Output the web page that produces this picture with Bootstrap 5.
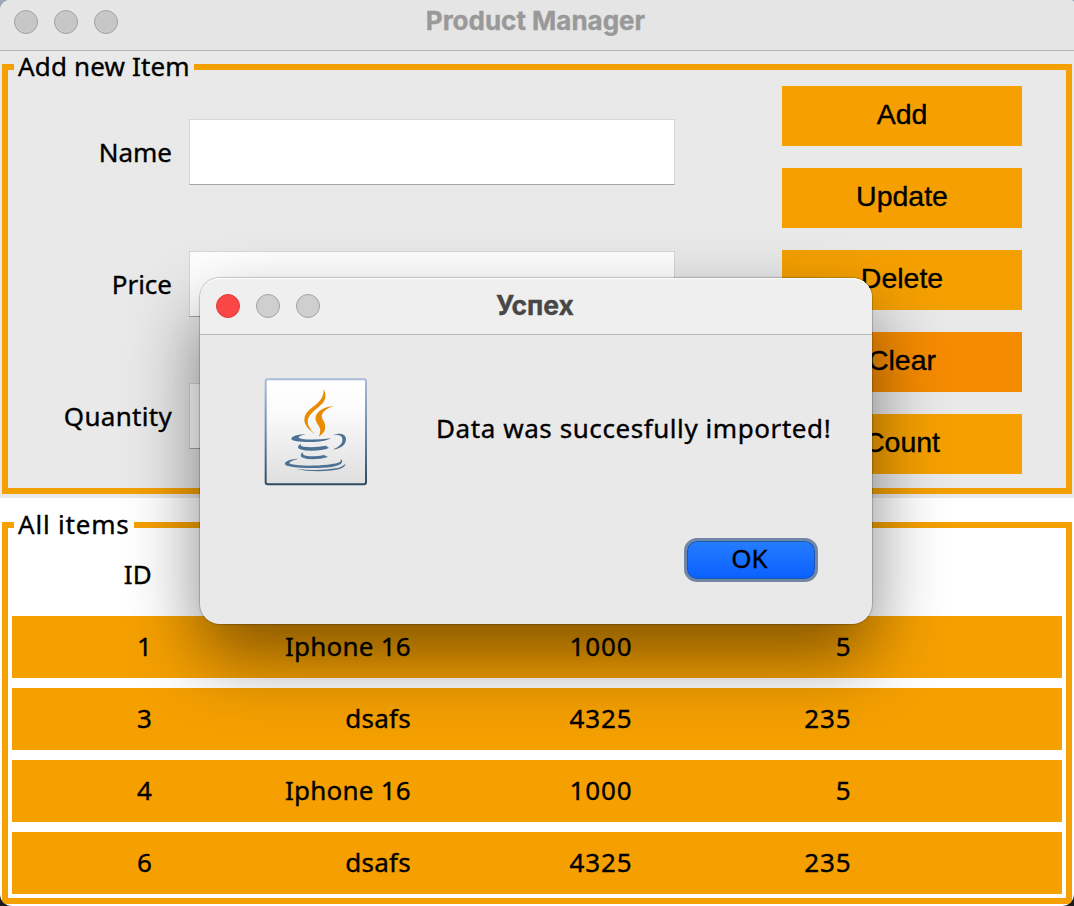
<!DOCTYPE html>
<html lang="en">
<head>
<meta charset="utf-8">
<title>Product Manager</title>
<link href="https://cdn.jsdelivr.net/npm/bootstrap@5.3.0/dist/css/bootstrap.min.css" rel="stylesheet">
<style>
:root{--amber:#f5a000;--panel:#e9e9e9}
body{font-family:"Noto Sans",sans-serif;font-size:26px;line-height:30px;color:#000;background:linear-gradient(#9aa6b2 50%,#1b1b1b 50%);height:906px;overflow:hidden;-webkit-text-stroke:.35px}
.app{height:906px;background:#fff;border-radius:10px 4px 12px 12px;overflow:hidden}
.titlebar{height:51px;background:#e5e5e5;border-bottom:1px solid #b4b4b4;padding:0 14px 7px}
.win-title{font:700 26px/30px Inter,sans-serif;color:#999;left:0;right:0}
.dot{width:24px;height:24px;border-radius:50%;background:#c7c7c7;border:1px solid #a2a2a2}
.form-panel{height:447px;background:var(--panel);padding:1px 2px 4px}
.list-panel{padding:12px 2px 2px;height:408px}
.box{border:6px solid var(--amber);min-width:0}
.box legend{float:none;width:auto;height:30px;margin:0 0 0 6px;padding:0 0 0 4px;font-size:26px;line-height:28px;white-space:nowrap}
.form-panel .box{height:442px}.list-panel .box{height:394px}
.form-panel legend{width:180px;letter-spacing:.15px}.list-panel legend{width:120px;letter-spacing:.8px}
.fields{width:667px;padding-top:37px;gap:66px}
.field-label{width:164px;margin-right:17px;line-height:66px;text-align:right}
.entry{width:486px;height:66px;border:1px solid #d6d6d6;border-bottom:1px solid #a5a5a5;border-radius:0;background:#fff}
.actions{width:240px;margin-left:107px;padding-top:4px;gap:22px}
.act{height:60px;border:0;border-radius:0;color:#000;background:var(--amber);font:28.5px/56px "Liberation Sans",sans-serif;padding:0 0 4px}
.act:hover,.act.hot{background:#f58b00}
.items{padding:0 4px}
.item{height:62px;margin-bottom:10px;background:var(--amber);display:grid;grid-template-columns:140px 259px 221px 219px;text-align:right;line-height:60px;letter-spacing:.25px}
.item.head{height:66px;background:none;line-height:68px}
.num{letter-spacing:.9px;margin-right:-.6px}
.dialog{position:absolute;left:200px;top:278px;width:672px;height:346px;border-radius:20px;background:var(--panel);box-shadow:0 0 1px 1px rgba(0,0,0,.2),0 34px 72px rgba(0,0,0,.47)}
.dialog-bar{height:57px;border-bottom:1px solid #b8b8b8;background:#efefef;border-radius:20px 20px 0 0;box-shadow:inset 0 2px 1px -1px #fff;padding:0 16px}
.dialog-bar .win-title{color:#474747;font-size:26.5px}
.dialog .dot{background:#cfcfcf}
.dialog .close-dot{background:#fb4646;border-color:#df3a3d}
.message{margin:35px 0 0 69px;white-space:nowrap;letter-spacing:.57px}
.ok{position:absolute;left:484px;top:260px;width:134px;height:44px;padding:0 3px 4px 0;border:3px solid #7187a5;border-radius:13px;background:linear-gradient(#257dff,#0a60ff);font:26px/34px "Noto Sans",sans-serif;color:#000;box-shadow:inset 0 0 0 1px #1956b5}
</style>
</head>
<body>
<div class="app position-relative">
  <header class="titlebar position-relative d-flex align-items-center gap-3">
    <span class="dot"></span><span class="dot"></span><span class="dot"></span>
    <div class="win-title position-absolute text-center" style="top:6px;left:-3px">Product Manager</div>
  </header>
  <section class="form-panel">
    <fieldset class="box">
      <legend>Add new Item</legend>
      <div class="d-flex">
        <div class="fields d-flex flex-column">
          <div class="d-flex"><label class="field-label" for="n">Name</label><input id="n" class="form-control entry"></div>
          <div class="d-flex"><label class="field-label" for="p">Price</label><input id="p" class="form-control entry"></div>
          <div class="d-flex"><label class="field-label" for="q" style="letter-spacing:.3px">Quantity</label><input id="q" class="form-control entry"></div>
        </div>
        <div class="actions d-flex flex-column">
          <button class="btn act">Add</button><button class="btn act">Update</button><button class="btn act">Delete</button><button class="btn act hot">Clear</button><button class="btn act">Count</button>
        </div>
      </div>
    </fieldset>
  </section>
  <section class="list-panel">
    <fieldset class="box">
      <legend>All items</legend>
      <div class="items">
        <div class="item head"><span>ID</span></div>
        <div class="item"><span>1</span><span>Iphone 16</span><span class="num">1000</span><span class="num">5</span></div>
        <div class="item"><span>3</span><span>dsafs</span><span class="num">4325</span><span class="num">235</span></div>
        <div class="item"><span>4</span><span>Iphone 16</span><span class="num">1000</span><span class="num">5</span></div>
        <div class="item"><span>6</span><span>dsafs</span><span class="num">4325</span><span class="num">235</span></div>
      </div>
    </fieldset>
  </section>
</div>
<div class="dialog" role="dialog">
  <div class="dialog-bar position-relative d-flex align-items-center gap-3">
    <span class="dot close-dot"></span><span class="dot"></span><span class="dot"></span>
    <div class="win-title position-absolute text-center" style="top:12px;left:-2px">Успех</div>
  </div>
  <div class="d-flex" style="padding:43px 0 0 64px">
    <svg width="103" height="108" viewBox="27 25 309 324">
      <defs>
        <linearGradient id="face" x2="0" y2="1"><stop stop-color="#fff"/><stop offset=".3" stop-color="#fbfbfb"/><stop offset="1" stop-color="#dedede"/></linearGradient>
        <linearGradient id="edge" x2="0" y2="1"><stop stop-color="#a9bcd6"/><stop offset=".5" stop-color="#6d8aa8"/><stop offset="1" stop-color="#2e4a62"/></linearGradient>
      </defs>
      <rect x="32" y="29" width="301" height="315" rx="6" fill="url(#face)" stroke="url(#edge)" stroke-width="6"/>
      <g fill="#e98a00"><path d="M206 59C218 82 209 98 190 113C167 132 150 146 162 171Q169 184 180 193C162 181 148 166 148 151C148 127 169 117 187 101Q207 84 206 59Z"/><path d="M236 109C208 119 194 134 203 149C210 160 212 169 210 178Q208 190 191 201Q200 184 192 170C184 157 179 148 183 138C189 123 209 111 236 109Z"/></g>
      <g fill="#4d7195"><path d="M153 193C128 200 124 205 142 208Q174 212 229 206Q213 215 177 217Q112 218 109 208C108 199 130 194 153 193Z"/><path d="M139 222Q133 229 146 231Q177 235 213 228L222 235Q202 243 170 243Q127 242 129 231Q130 225 139 222Z"/><path d="M145 248Q140 257 153 258Q181 262 207 256L219 262Q198 269 172 269Q137 268 137 257Q138 250 145 248Z"/><path d="M130 267C110 272 94 280 110 284C144 292 238 287 255 277Q260 274 256 268Q264 271 260 280C247 300 129 298 96 288C78 279 103 267 130 267Z"/><path d="M236 197C255 187 273 194 273 209C273 228 252 239 233 240C252 231 264 222 262 207Q260 193 236 197Z"/><path d="M123 297Q187 306 247 295Q265 291 272 281Q272 297 235 302Q168 309 123 297Z"/></g>
    </svg>
    <div class="message">Data was succesfully imported!</div>
  </div>
  <button class="btn ok">OK</button>
</div>
<script src="https://cdn.jsdelivr.net/npm/bootstrap@5.3.0/dist/js/bootstrap.bundle.min.js"></script>
</body>
</html>
